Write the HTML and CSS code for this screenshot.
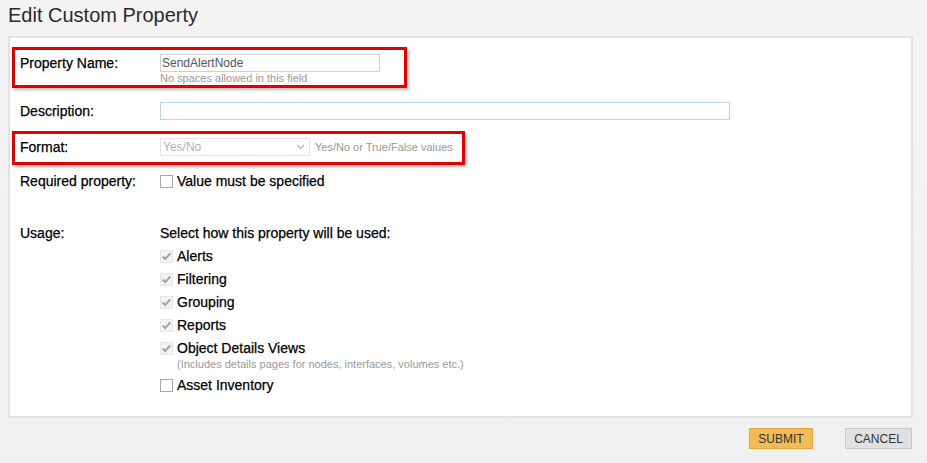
FILE: index.html
```html
<!DOCTYPE html>
<html lang="en">
<head>
  <title>Edit Custom Property</title>
  <meta charset="UTF-8">
  <meta name="viewport" content="width=device-width, initial-scale=1.0">
  <link rel="stylesheet" href="styles.css">
</head>
<body>
  <h1 class="page-title">Edit Custom Property</h1>

  <div class="form-panel">
    <div class="form-row highlight highlight-name">
      <div class="label">Property Name:</div>
      <div class="field">
        <div class="text-input name-input">SendAlertNode</div>
        <div class="hint">No spaces allowed in this field</div>
      </div>
    </div>

    <div class="form-row plain description-row">
      <div class="label">Description:</div>
      <div class="field">
        <div class="text-input description-input"></div>
      </div>
    </div>

    <div class="form-row highlight highlight-format">
      <div class="label">Format:</div>
      <div class="field field-inline">
        <div class="select-box">
          <span>Yes/No</span>
          <svg class="chevron" width="9" height="6" viewBox="0 0 9 6"><path d="M1 1l3.5 3.5L8 1" fill="none" stroke="#b5b5b5" stroke-width="1.1"/></svg>
        </div>
        <span class="hint hint-inline">Yes/No or True/False values</span>
      </div>
    </div>

    <div class="form-row plain required-row">
      <div class="label">Required property:</div>
      <div class="field">
        <label class="check-item"><span class="checkbox"></span>Value must be specified</label>
      </div>
    </div>

    <div class="form-row plain usage-row">
      <div class="label">Usage:</div>
      <div class="field usage-list">
        <div class="usage-title">Select how this property will be used:</div>
        <label class="check-item"><span class="checkbox checked"><svg width="11" height="11" viewBox="0 0 11 11"><path d="M1.8 5.5l2.4 2.6L9.3 2.3" fill="none" stroke="#a0a0a0" stroke-width="1.9"/></svg></span>Alerts</label>
        <label class="check-item"><span class="checkbox checked"><svg width="11" height="11" viewBox="0 0 11 11"><path d="M1.8 5.5l2.4 2.6L9.3 2.3" fill="none" stroke="#a0a0a0" stroke-width="1.9"/></svg></span>Filtering</label>
        <label class="check-item"><span class="checkbox checked"><svg width="11" height="11" viewBox="0 0 11 11"><path d="M1.8 5.5l2.4 2.6L9.3 2.3" fill="none" stroke="#a0a0a0" stroke-width="1.9"/></svg></span>Grouping</label>
        <label class="check-item"><span class="checkbox checked"><svg width="11" height="11" viewBox="0 0 11 11"><path d="M1.8 5.5l2.4 2.6L9.3 2.3" fill="none" stroke="#a0a0a0" stroke-width="1.9"/></svg></span>Reports</label>
        <label class="check-item"><span class="checkbox checked"><svg width="11" height="11" viewBox="0 0 11 11"><path d="M1.8 5.5l2.4 2.6L9.3 2.3" fill="none" stroke="#a0a0a0" stroke-width="1.9"/></svg></span>Object Details Views</label>
        <div class="hint item-hint">(Includes details pages for nodes, interfaces, volumes etc.)</div>
        <label class="check-item"><span class="checkbox"></span>Asset Inventory</label>
      </div>
    </div>
  </div>

  <div class="button-bar">
    <button class="btn btn-submit">SUBMIT</button>
    <button class="btn btn-cancel">CANCEL</button>
  </div>
</body>
</html>
```

FILE: styles.css
```css
body {
  margin: 0;
  padding: 0 8px;
  background: linear-gradient(to bottom, #f4f4f4, #f0f0f0);
  font-family: 'Liberation Sans', Arial, sans-serif;
  color: #000;
  min-height: 463px;
  box-sizing: border-box;
}
.page-title {
  margin: 0;
  padding-top: 3px;
  height: 36px;
  box-sizing: border-box;
  font-size: 20px;
  font-weight: normal;
  line-height: 24px;
  color: #2a2a2a;
}
.form-panel {
  width: 905px;
  box-sizing: border-box;
  background: #fff;
  border: 2px solid #e3e3e3;
  padding: 9px 0 19px 0;
}
.form-row {
  display: flex;
  align-items: flex-start;
  font-size: 14px;
  line-height: 18px;
  -webkit-text-stroke: 0.25px #000;
}
.form-row.plain {
  padding-left: 10px;
}
.form-row.highlight {
  width: fit-content;
  margin-left: 2px;
  border: 3px solid #e10000;
  box-shadow: 2px 2px 3px rgba(0, 0, 0, 0.28);
  padding: 4px 0 0 5px;
}
.highlight-name {
  padding-right: 24px !important;
}
.highlight-format {
  margin-top: 11px;
  padding-right: 9px !important;
  padding-bottom: 6px !important;
}
.description-row {
  margin-top: 14px;
}
.required-row {
  margin-top: 7px;
}
.usage-row {
  margin-top: 32px;
  line-height: 23px;
}
.label {
  width: 140px;
  flex: none;
}
.field-inline {
  display: flex;
  align-items: center;
  gap: 5px;
}
.text-input {
  height: 18px;
  box-sizing: border-box;
  border: 1px solid #cfcfcf;
  font-size: 12px;
  line-height: 16px;
  padding: 0 1px;
  color: #555;
  -webkit-text-stroke: 0;
}
.name-input {
  width: 220px;
}
.description-input {
  width: 570px;
  border-color: #b7d5f3;
}
.hint {
  font-size: 11px;
  line-height: 13px;
  color: #999;
  -webkit-text-stroke: 0;
}
.hint-inline {
  line-height: 18px;
}
.select-box {
  width: 150px;
  height: 18px;
  box-sizing: border-box;
  border: 1px solid #e2e2e2;
  display: flex;
  align-items: center;
  justify-content: space-between;
  padding: 0 4px 0 2px;
  font-size: 12px;
  color: #b0b0b0;
  -webkit-text-stroke: 0;
}
.check-item {
  display: flex;
  align-items: center;
  gap: 4px;
}
.checkbox {
  width: 13px;
  height: 13px;
  box-sizing: border-box;
  border: 1px solid #a9a9a9;
  background: #fff;
  display: flex;
  align-items: center;
  justify-content: center;
}
.checkbox.checked {
  border: 1px solid #e6e6e6;
  background: #f3f3f3;
}
.item-hint {
  margin-top: -2px;
  margin-bottom: 3px;
  padding-left: 17px;
}
.button-bar {
  width: 905px;
  display: flex;
  justify-content: flex-end;
  gap: 32px;
  margin-top: 10px;
  padding-right: 1px;
  box-sizing: border-box;
}
.btn {
  height: 21px;
  padding: 0;
  font-family: 'Liberation Sans', Arial, sans-serif;
  font-size: 12px;
  color: #333;
  cursor: pointer;
}
.btn-submit {
  width: 64px;
  background: #f1bb55;
  border: 1px solid #e4a63a;
}
.btn-cancel {
  width: 67px;
  background: #e1e1e1;
  border: 1px solid #c9c9c9;
}
```
